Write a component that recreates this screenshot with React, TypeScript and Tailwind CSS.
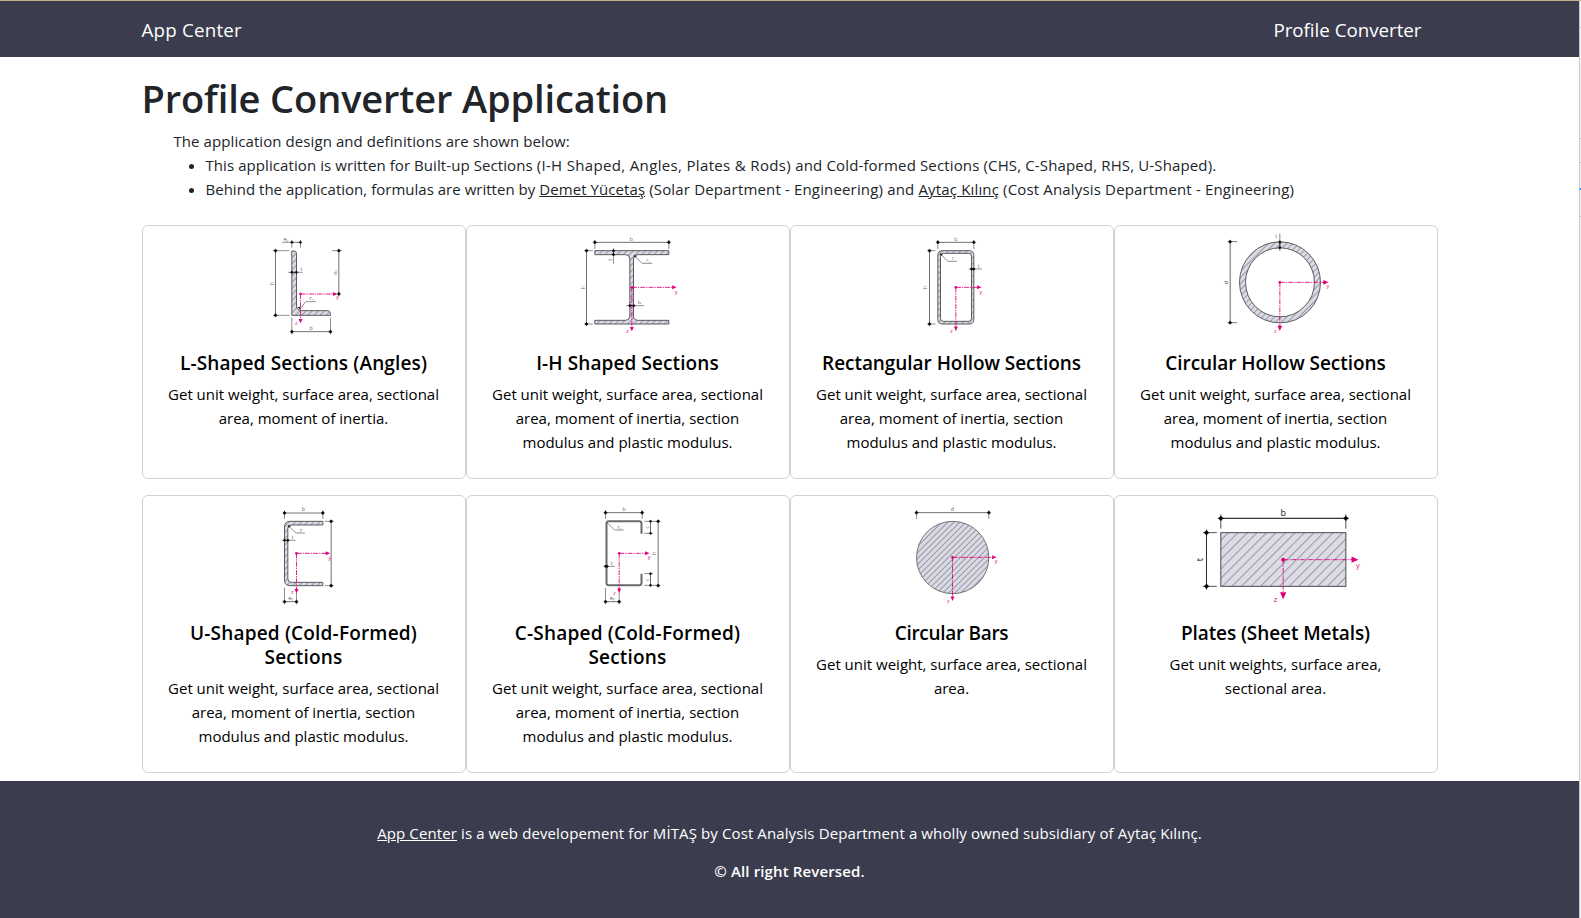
import type { ReactNode } from "react";

const INK = "#2b2b2b";
const AXIS = "#e0007a";
const FILL = "#dcdce6";
const EDGE = "#5c5c60";

/** Dimension line with a diamond marker on both ends. */
function Dim({ x1, y1, x2, y2, r = 6, w = 2 }: { x1: number; y1: number; x2: number; y2: number; r?: number; w?: number }) {
  const dot = (x: number, y: number) => (
    <path d={`M${x - r} ${y}L${x} ${y - r}L${x + r} ${y}L${x} ${y + r}Z`} fill="#000" stroke="#000" strokeWidth={1.5} />
  );
  return (
    <g>
      <path d={`M${x1} ${y1}L${x2} ${y2}`} stroke={INK} strokeWidth={w} />
      {dot(x1, y1)}
      {dot(x2, y2)}
    </g>
  );
}

function Line({ d, w = 1.8 }: { d: string; w?: number }) {
  return <path d={d} stroke="#444" strokeWidth={w} fill="none" />;
}

/** Centroid with the y axis to the right and the z axis pointing down. */
function Axes({ x, y, right, down, s = 6 }: { x: number; y: number; right: number; down: number; s?: number }) {
  return (
    <g stroke={AXIS} fill={AXIS}>
      <path d={`M${x} ${y}H${right - 12}M${x} ${y}V${down - 12}`} strokeWidth={2.6} strokeDasharray="15 3 4 3" fill="none" />
      <circle cx={x} cy={y} r={4} stroke="none" />
      <path d={`M${right} ${y}l${-2.2 * s} ${-s}v${2 * s}Z`} stroke="none" />
      <path d={`M${x} ${down}l${-s} ${-2.2 * s}h${2 * s}Z`} stroke="none" />
    </g>
  );
}

function T({ x, y, children, size = 16, c = "#5f5f5f", turn = false }: { x: number; y: number; children: string; size?: number; c?: string; turn?: boolean }) {
  return (
    <text x={x} y={y} fontSize={size} fill={c} textAnchor="middle" transform={turn ? `rotate(-90 ${x} ${y})` : undefined}>
      {children}
    </text>
  );
}

function Figure({ id, left, gap = 13, children }: { id: string; left: number; gap?: number; children: ReactNode }) {
  return (
    <svg className="block h-[109px] w-full overflow-visible" viewBox={`${left} 3 966 327`} fontFamily="Open Sans, sans-serif">
      <defs>
        <pattern id={id} width={gap} height={gap} patternUnits="userSpaceOnUse" patternTransform="rotate(45)">
          <rect width={gap} height={gap} fill={FILL} />
          <path d={`M${gap / 2} 0V${gap}`} stroke="#9a9aa4" strokeWidth={3.2} />
        </pattern>
      </defs>
      {children}
    </svg>
  );
}

const angle = (
  <Figure id="hatch-l" left={-351.5}>
    <path d="M95 271V78H103Q109 78 109 86V243Q110 257 124 257H204Q211 258 211 271Z" fill="url(#hatch-l)" stroke={EDGE} strokeWidth={3} />
    <Line d="M95 45V68M121 45V68M40 77H88M40 271H88M95 278V328M211 278V328M84 142H127M215 77H244M121 250L137 230H168" />
    <Line d="M66 52H95" />
    <Dim x1={95} y1={52} x2={121} y2={52} r={4} />
    <Dim x1={46} y1={77} x2={46} y2={271} r={5} />
    <Dim x1={236} y1={77} x2={236} y2={207} r={5} />
    <Dim x1={95} y1={142} x2={109} y2={142} r={4} />
    <Dim x1={95} y1={320} x2={211} y2={320} r={5} />
    <path d="M122 256l-10-9 8-2Z" fill="#222" />
    <Axes x={121} y={207} right={232} down={295} />
    <T x={77} y={48}>e₂</T>
    <T x={41} y={175} turn>h</T>
    <T x={232} y={142} turn>eᵧ</T>
    <T x={124} y={138}>t</T>
    <T x={154} y={226}>r₁</T>
    <T x={153} y={315} c="#3c6fa8">b</T>
    <T x={232} y={222} c={AXIS}>y</T>
    <T x={108} y={299} c={AXIS}>z</T>
  </Figure>
);

const beam = (
  <Figure id="hatch-i" left={-309.5}>
    <path
      d="M74 77H296V89H203Q190 90 190 102V273Q190 285 203 286H296V297H74V286H167Q179 285 179 273V102Q179 90 167 89H74Z"
      fill="url(#hatch-i)"
      stroke={EDGE}
      strokeWidth={3}
    />
    <Line d="M74 45V72M296 45V72M43 77H68M43 297H68M130 70V116M168 242H222M192 91L216 115H246" />
    <Dim x1={74} y1={52} x2={296} y2={52} r={5} />
    <Dim x1={49} y1={77} x2={49} y2={297} r={5} />
    <Dim x1={130} y1={77} x2={130} y2={89} r={4} />
    <Axes x={185} y={187} right={319} down={319} />
    <Dim x1={179} y1={242} x2={191} y2={242} r={4} />
    <path d="M191 90l9 3-6 6Z" fill="#222" />
    <T x={184} y={47} c="#b56a5a">b</T>
    <T x={44} y={188} turn>h</T>
    <T x={125} y={104} turn>t</T>
    <T x={234} y={111} c="#b08a60">r₁</T>
    <T x={208} y={238}>tᵥ</T>
    <T x={318} y={206} c={AXIS}>y</T>
    <T x={172} y={324} c={AXIS}>z</T>
  </Figure>
);

const rhs = (
  <Figure id="hatch-r" left={-357.5}>
    <path
      fillRule="evenodd"
      d="M97 77H177Q191 77 191 91V283Q191 297 177 297H97Q83 297 83 283V91Q83 77 97 77ZM99 85Q91 85 91 95V280Q91 289 99 289H176Q184 289 184 280V95Q184 85 176 85Z"
      fill="url(#hatch-r)"
      stroke={EDGE}
      strokeWidth={3}
    />
    <Line d="M83 45V72M191 45V72M52 77H76M52 297H76M191 132H215M176 132H184M91 87L113 109H141" />
    <Dim x1={83} y1={52} x2={191} y2={52} r={5} />
    <Dim x1={58} y1={77} x2={58} y2={297} r={5} />
    <Dim x1={184} y1={132} x2={191} y2={132} r={4} />
    <Axes x={137} y={187} right={214} down={318} />
    <path d="M89 85l9 3-6 6Z" fill="#222" />
    <T x={137} y={47} c="#b56a5a">b</T>
    <T x={52} y={188} turn>h</T>
    <T x={129} y={105} c="#b08a60">r</T>
    <T x={206} y={129}>t</T>
    <T x={212} y={206} c={AXIS}>y</T>
    <T x={124} y={324} c={AXIS}>z</T>
  </Figure>
);

const chs = (
  <Figure id="hatch-c" left={-285.5}>
    <path
      fillRule="evenodd"
      d="M88 172A121.500 121.500 0 1 0 331 172A121.500 121.500 0 1 0 88 172ZM106 172A103.500 103.500 0 1 0 313 172A103.500 103.500 0 1 0 106 172Z"
      fill="url(#hatch-c)"
      stroke={EDGE}
      strokeWidth={3}
    />
    <Line d="M53 50H81M53 293H81M209 26V78" w={2} />
    <Dim x1={60} y1={50} x2={60} y2={293} r={5} w={2.2} />
    <Dim x1={209} y1={51} x2={209} y2={68} r={4} />
    <Axes x={209} y={172} right={355} down={318} s={7} />
    <T x={53} y={173} turn c="#333">d</T>
    <T x={198} y={38}>t</T>
    <T x={353} y={190} c={AXIS}>y</T>
    <T x={195} y={324} c={AXIS}>z</T>
  </Figure>
);

const channel = (
  <Figure id="hatch-u" left={-381.5}>
    <path
      d="M158 79H59Q43 79 43 96V255Q43 272 59 272H158V262H63Q53 262 53 251V100Q53 90 63 90H158Z"
      fill="url(#hatch-u)"
      stroke={EDGE}
      strokeWidth={3}
    />
    <Line d="M43 46V72M158 46V72M164 79H190M164 272H190M43 278V328M79 290V328M36 136H76M55 92L77 114H104" />
    <Dim x1={43} y1={54} x2={158} y2={54} r={5} />
    <Dim x1={183} y1={79} x2={183} y2={272} r={5} />
    <Dim x1={43} y1={136} x2={53} y2={136} r={4} />
    <Dim x1={43} y1={320} x2={79} y2={320} r={5} />
    <Axes x={79} y={175} right={180} down={295} />
    <path d="M53 90l9 3-6 6Z" fill="#222" />
    <T x={100} y={48}>b</T>
    <T x={93} y={110}>r</T>
    <T x={67} y={132}>t</T>
    <T x={179} y={194} c={AXIS}>y</T>
    <T x={66} y={298} c={AXIS}>z</T>
    <T x={61} y={315}>eᵧ</T>
  </Figure>
);

const lipped = (
  <Figure id="hatch-s" left={-369.5}>
    <path d="M154 116V86Q154 79 147 79H56Q49 79 49 86V264Q49 271 56 271H147Q154 271 154 264V236" fill="none" stroke="#6a6a6e" strokeWidth={6} />
    <Line d="M46 45V72M156 45V72M162 79H210M162 271H210M162 115H188M162 236H188M46 278V328M87 290V328M40 214H74M50 83L74 105H101" />
    <Dim x1={46} y1={53} x2={156} y2={53} r={5} />
    <Dim x1={204} y1={79} x2={204} y2={272} r={5} />
    <Dim x1={181} y1={79} x2={181} y2={115} r={4} />
    <Dim x1={181} y1={236} x2={181} y2={271} r={4} />
    <Dim x1={46} y1={214} x2={51} y2={214} r={4} />
    <Dim x1={46} y1={320} x2={87} y2={320} r={5} />
    <Axes x={87} y={175} right={178} down={294} />
    <T x={101} y={47} c="#3f8a80">b</T>
    <T x={88} y={102}>r₁</T>
    <T x={65} y={210}>t</T>
    <T x={178} y={97} turn>c</T>
    <T x={178} y={254} turn>c</T>
    <T x={198} y={175} turn>h</T>
    <T x={177} y={193} c={AXIS}>y</T>
    <T x={73} y={299} c={AXIS}>z</T>
    <T x={66} y={316}>eᵧ</T>
  </Figure>
);

const bar = (
  <Figure id="hatch-b" left={-327.5} gap={12.7}>
    <circle cx={157.500} cy={187.500} r={108.500} fill="url(#hatch-b)" stroke={EDGE} strokeWidth={2.500} />
    <Line d="M49 46V72M266 46V72" />
    <Dim x1={49} y1={53} x2={266} y2={53} r={5} />
    <Axes x={157} y={187} right={289} down={318} />
    <T x={157} y={48}>d</T>
    <T x={288} y={205} c={AXIS}>y</T>
    <T x={144} y={323} c={AXIS}>z</T>
  </Figure>
);

const plate = (
  <Figure id="hatch-p" left={-210.5} gap={20.2}>
    <rect x={107} y={113} width={375} height={161} fill="url(#hatch-p)" stroke="#4a4a4e" strokeWidth={3} />
    <Line d="M107 58V101M482 58V101M53 113H95M53 274H95" w={2.800} />
    <Dim x1={98} y1={70} x2={491} y2={70} r={0} w={2.600} />
    <Dim x1={107} y1={70} x2={482} y2={70} r={7} w={2.600} />
    <Dim x1={64} y1={104} x2={64} y2={284} r={0} w={2.600} />
    <Dim x1={64} y1={113} x2={64} y2={274} r={7} w={2.600} />
    <Axes x={294} y={194} right={520} down={313} s={9.500} />
    <circle cx={294} cy={194} r={6} fill={AXIS} />
    <T x={294} y={62} size={27} c="#111">b</T>
    <T x={55} y={194} size={27} c="#111" turn>t</T>
    <T x={518} y={220} size={22} c={AXIS}>y</T>
    <T x={271} y={321} size={22} c={AXIS}>z</T>
  </Figure>
);

const FULL = ["Get unit weight, surface area, sectional", "area, moment of inertia, section", "modulus and plastic modulus."];

const rows: { figure: ReactNode; title: string[]; spacing: string; text: string[] }[][] = [
  [
    { figure: angle, title: ["L-Shaped Sections (Angles)"], spacing: "tracking-[0.13px]", text: ["Get unit weight, surface area, sectional", "area, moment of inertia."] },
    { figure: beam, title: ["I-H Shaped Sections"], spacing: "tracking-[0.1px]", text: FULL },
    { figure: rhs, title: ["Rectangular Hollow Sections"], spacing: "tracking-[-0.05px]", text: FULL },
    { figure: chs, title: ["Circular Hollow Sections"], spacing: "tracking-[-0.05px]", text: FULL },
  ],
  [
    { figure: channel, title: ["U-Shaped (Cold-Formed)", "Sections"], spacing: "tracking-[0.18px]", text: FULL },
    { figure: lipped, title: ["C-Shaped (Cold-Formed)", "Sections"], spacing: "tracking-[0.2px]", text: FULL },
    { figure: bar, title: ["Circular Bars"], spacing: "tracking-[-0.3px]", text: ["Get unit weight, surface area, sectional", "area."] },
    { figure: plate, title: ["Plates (Sheet Metals)"], spacing: "tracking-[-0.1px]", text: ["Get unit weights, surface area,", "sectional area."] },
  ],
];

export default function App() {
  return (
    <div className="flex h-[918px] w-[1581px] flex-col overflow-hidden bg-white font-['Open_Sans',sans-serif] text-[15px] leading-6 text-[#212529]">
      <div className="h-px shrink-0 bg-[#c9ae8e]" />
      <div className="flex min-h-0 flex-1">
        <div className="flex w-[1579px] flex-col">
          <header className="h-14 shrink-0 bg-[#3b3d4e]">
            <nav className="mx-auto flex h-full w-[1296px] items-center justify-between pt-[2px] pr-4 text-[18.75px] whitespace-nowrap text-white">
              <a className="tracking-[0.2px]">App Center</a>
              <a className="tracking-[-0.02px]">Profile Converter</a>
            </nav>
          </header>
          <main className="mx-auto w-[1296px] flex-1 whitespace-nowrap">
            <h1 className="mt-[17px] text-[38px] leading-12 font-semibold tracking-[-0.13px]">Profile Converter Application</h1>
            <div className="mt-[7px] pl-8">
              <p className="tracking-[0.08px]">The application design and definitions are shown below:</p>
              <ul className="list-disc pl-8">
                <li>
                  <span className="tracking-[0.08px]">This application is written for Built-up Sections </span>
                  <span className="tracking-[0.34px]">(I-H Shaped, Angles, Plates &amp; Rods) </span>
                  <span className="tracking-[0.14px]">and Cold-formed Sections (CHS, C-Shaped, RHS, U-Shaped).</span>
                </li>
                <li className="tracking-[0.16px]">
                  <span className="tracking-[0.02px]">Behind the application, formulas are written by </span>
                  <a className="tracking-[0.08px] underline">Demet Yücetaş</a> (Solar Department - Engineering) and{" "}
                  <a className="underline">Aytaç Kılınç</a> (Cost Analysis Department - Engineering)
                </li>
              </ul>
            </div>
            <div className="mt-6 flex flex-col gap-4">
              {rows.map((cards, i) => (
                <div key={i} className={i === 0 ? "grid h-[254px] grid-cols-4" : "grid h-[278px] grid-cols-4"}>
                  {cards.map((card) => (
                    <article key={card.title[0]} className="rounded-md border border-[#d2d2d2] text-center text-black">
                      {card.figure}
                      <h5 className={`mt-4 text-[19px] leading-6 font-semibold ${card.spacing}`}>
                        {card.title.map((t) => (
                          <span key={t} className="block">{t}</span>
                        ))}
                      </h5>
                      <p className="mt-[7px]">
                        {card.text.map((t) => (
                          <span key={t} className="block">{t}</span>
                        ))}
                      </p>
                    </article>
                  ))}
                </div>
              ))}
            </div>
          </main>
          <footer className="flex h-[137px] shrink-0 flex-col items-center gap-[14px] bg-[#3b3d4e] pt-10 whitespace-nowrap text-white">
            <p className="tracking-[0.11px]">
              <a className="underline">App Center</a> is a web developement for MİTAŞ by Cost Analysis Department a wholly owned subsidiary of Aytaç Kılınç.
            </p>
            <p className="font-semibold tracking-[0.13px]">© All right Reversed.</p>
          </footer>
        </div>
        <div className="w-px bg-[#c8c8c8]" />
        <div className="flex w-px flex-col bg-[#f4f4f4]">
          <div className="mt-[26px] h-px bg-[#c8c8c8]" />
          <div className="mt-[110px] h-px bg-[#c8c8c8]" />
          <div className="mt-[23px] h-px bg-[#c8c8c8]" />
          <div className="mt-[25px] h-[2px] bg-[#1a73e8]" />
          <div className="mt-[26px] h-px bg-[#c8c8c8]" />
        </div>
      </div>
    </div>
  );
}
